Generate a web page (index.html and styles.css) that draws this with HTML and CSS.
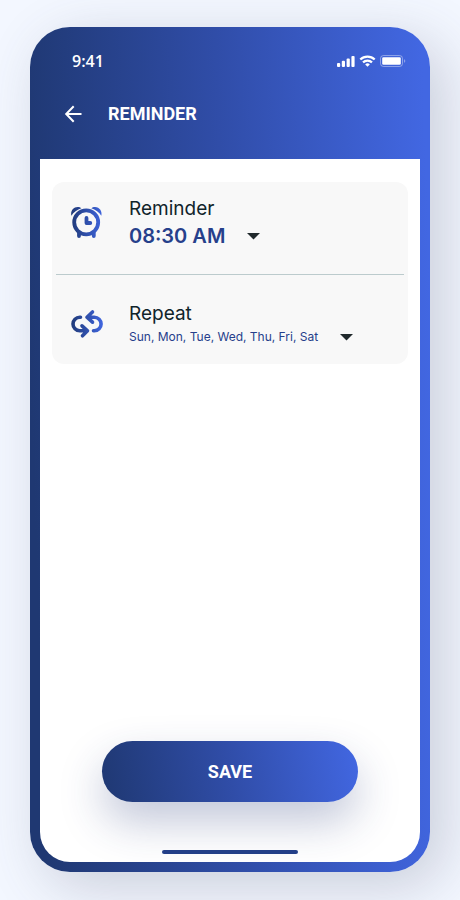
FILE: index.html
```
<!DOCTYPE html>
<html lang="en">
<head>
    <meta charset="UTF-8">
    <meta name="viewport" content="width=device-width, initial-scale=1.0">
    <title>Reminder</title>
    <link rel="stylesheet" href="styles.css">
</head>
<body>
    <div class="phone">
        <header class="header">
            <div class="status-bar">
                <span class="clock">9:41</span>
                <svg class="status-icons" width="69" height="13" viewBox="0 0 69 13" fill="#fff" aria-hidden="true">
                    <rect x="0" y="8" width="3.200" height="4" rx="1"/>
                    <rect x="4.800" y="5.800" width="3.200" height="6.200" rx="1"/>
                    <rect x="9.600" y="3.500" width="3.200" height="8.500" rx="1"/>
                    <rect x="14.400" y="1" width="3.200" height="11" rx="1"/>
                    <g fill="none" stroke="#fff" stroke-width="2.200">
                        <path d="M23.300 4.500a10.300 10.300 0 0 1 14.400 0"/>
                        <path d="M26 7.400a6.400 6.400 0 0 1 9 0"/>
                    </g>
                    <path d="M28.200 9.400a3.400 3.400 0 0 1 4.600 0L30.500 11.700z"/>
                    <rect x="43.500" y=".5" width="22" height="11" rx="3" fill="none" stroke="#fff" stroke-opacity=".4"/>
                    <rect x="45.200" y="2.200" width="18.600" height="7.600" rx="1.300"/>
                    <path d="M67 4.200v3.600c.8-.3 1.300-1 1.300-1.800s-.5-1.500-1.300-1.800z" fill-opacity=".4"/>
                </svg>
            </div>
            <div class="title-bar">
                <button class="back" type="button" aria-label="Back">
                    <svg width="18" height="18" viewBox="0 0 18 18" fill="none" stroke="#fff" stroke-width="2">
                        <path d="M17.500 9H2.500M9.700 1.300L2.200 9l7.500 7.700"/>
                    </svg>
                </button>
                <h1>REMINDER</h1>
            </div>
        </header>

        <main class="screen">
            <section class="card">
                <div class="row">
                    <svg class="row-icon" width="32" height="32" viewBox="0 0 32 32" aria-hidden="true">
                        <defs>
                            <linearGradient id="blue" gradientUnits="userSpaceOnUse" x1="0" y1="0" x2="32" y2="0">
                                <stop offset="0" stop-color="#203a78"/>
                                <stop offset="1" stop-color="#4066e0"/>
                            </linearGradient>
                        </defs>
                        <g fill="none" stroke="url(#blue)">
                            <circle cx="15.200" cy="16.300" r="12" stroke-width="3.800"/>
                            <path d="M8 27v3M22.800 27v3" stroke-width="3.800" stroke-linecap="round"/>
                            <path d="M15.500 12v5H19.300" stroke-width="3.800" stroke-linecap="round" stroke-linejoin="round"/>
                        </g>
                        <path d="M.4 9.800C-.8 5.500 2 .9 6.700.9c1.500 0 2.700.4 3.700 1.300C6.300 3.400 2.400 6.200.4 9.800z" fill="url(#blue)"/>
                        <path d="M30.300 9.800C31.500 5.500 28.700.9 24 .9c-1.500 0-2.700.4-3.700 1.300 4.100 1.200 8 4 10 7.600z" fill="url(#blue)"/>
                    </svg>
                    <div class="field">
                        <label for="time">Reminder</label>
                        <div class="picker">
                            <select id="time" class="time">
                                <option>08:30 AM</option>
                            </select>
                            <svg class="caret" width="13" height="7" viewBox="0 0 13 7"><path d="M0 0h13L6.500 6.500z"/></svg>
                        </div>
                    </div>
                </div>
                <hr>
                <div class="row">
                    <svg class="row-icon" width="32" height="32" viewBox="0 0 32 32" fill="none" stroke="url(#blue)" stroke-width="3.600" stroke-linecap="round" stroke-linejoin="round" aria-hidden="true">
                        <path d="M9.500 10.200H8.800a6.500 6.500 0 0 0 0 13.600H16M11 18.800l5.500 5-5 5"/>
                        <path d="M22.500 23.800h.8a6.500 6.500 0 0 0 0-13.600H16M21.500 5l-5.500 5.200 5.500 5"/>
                    </svg>
                    <div class="field">
                        <label for="days">Repeat</label>
                        <div class="picker">
                            <select id="days" class="days">
                                <option>Sun, Mon, Tue, Wed, Thu, Fri, Sat</option>
                            </select>
                            <svg class="caret" width="13" height="7" viewBox="0 0 13 7"><path d="M0 0h13L6.500 6.500z"/></svg>
                        </div>
                    </div>
                </div>
            </section>

            <button class="save" type="button">SAVE</button>
            <div class="home-bar"></div>
        </main>
    </div>
</body>
</html>
```

FILE: styles.css
```
* {
    box-sizing: border-box;
}

body {
    display: flex;
    min-height: 100vh;
    margin: 0;
    padding: 27px 30px 28px;
    font-family: Inter, "Open Sans", sans-serif;
    background-color: #f3f7ff;
}

.phone {
    display: flex;
    flex-direction: column;
    flex: 1;
    padding: 0 10px 10px;
    border-radius: 40px;
    background: linear-gradient(88deg, #1f3872 4%, #304da8 50%, #4267e2 98%);
    box-shadow: 14px 14px 56px rgba(70, 75, 100, 0.24);
}

.header {
    height: 132px;
    padding: 24px 14px 0 24px;
    color: white;
}

.status-bar {
    display: flex;
    align-items: center;
    justify-content: space-between;
    height: 20px;
    padding-left: 8px;
}

.clock {
    font: 600 16px "Open Sans", sans-serif;
}

.title-bar {
    display: flex;
    align-items: center;
    gap: 26px;
    margin-top: 32px;
}

.back {
    display: flex;
    padding: 0;
    border: none;
    background: none;
    cursor: pointer;
}

h1 {
    margin: 0;
    font: bold 18px/22px Roboto, sans-serif;
}

.screen {
    display: flex;
    flex-direction: column;
    align-items: center;
    flex: 1;
    padding: 23px 12px 8px;
    border-radius: 0 0 30px 30px;
    background-color: white;
    overflow: hidden;
}

.card {
    width: 100%;
    padding: 13px 4px 18px;
    border-radius: 12px;
    background-color: #f8f8f8;
}

.row {
    display: flex;
    align-items: center;
    gap: 26px;
    padding-left: 15px;
}

.field label {
    display: block;
    color: #10242b;
    font-size: 19px;
    line-height: 28px;
}

hr {
    margin: 25px 0;
    border: none;
    border-top: 1px solid #bccbcd;
}

.picker {
    position: relative;
    width: fit-content;
}

select {
    display: block;
    margin: 0;
    border: none;
    background: none;
    color: #26408b;
    font-family: inherit;
    appearance: none;
    cursor: pointer;
}

.time {
    padding: 0 34px 0 0;
    font-size: 20px;
    font-weight: 600;
    line-height: 26px;
}

.days {
    padding: 0 34px 0 0;
    font-size: 12px;
    line-height: 18px;
}

.caret {
    position: absolute;
    top: calc(50% - 3px);
    right: 0;
    fill: #20292c;
    pointer-events: none;
}

.save {
    width: 72%;
    height: 61px;
    margin-top: auto;
    border: none;
    border-radius: 31px;
    background: linear-gradient(80deg, #1f3872, #304da8 50%, #4267e2);
    box-shadow: 0 20px 44px rgba(35, 55, 120, 0.28);
    color: white;
    font: bold 18px Roboto, sans-serif;
    cursor: pointer;
}

.home-bar {
    width: 136px;
    height: 4px;
    margin-top: 48px;
    border-radius: 2px;
    background-color: #233f88;
}
```
